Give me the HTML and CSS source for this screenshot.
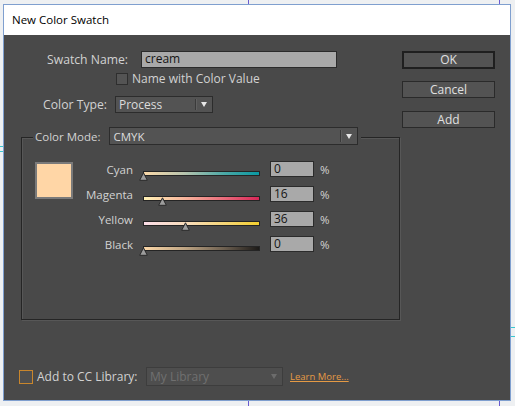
FILE: index.html
```html
<!DOCTYPE html>
<html>
<head>
<meta charset="utf-8">
<link rel="stylesheet" href="styles.css">
</head>
<body>
<div class="desk">
  <span class="guide gv gv1"></span>
  <span class="guide gv gv2"></span>
  <span class="guide gh gh1"></span>
  <span class="guide gh gh2"></span>
  <span class="guide gh gh3"></span>
  <span class="guide gh gh4"></span>
  <div class="win">
    <div class="titlebar">New Color Swatch</div>
    <div class="body">
      <div class="main">
        <div class="left">
          <div class="row r-name">
            <span class="lbl w-name">Swatch Name:</span>
            <div class="field name">cream</div>
          </div>
          <div class="row r-check">
            <span class="cb"></span>
            <span class="cb-text">Name with Color Value</span>
          </div>
          <div class="row r-type">
            <span class="lbl w-type">Color Type:</span>
            <div class="select type"><span class="sel-text">Process</span><span class="sep"></span><span class="arrow"></span></div>
          </div>
          <div class="frame">
            <div class="legend">
              <span class="lbl">Color Mode:</span>
              <div class="select mode"><span class="sel-text">CMYK</span><span class="sep"></span><span class="arrow"></span></div>
            </div>
            <div class="frame-body">
              <div class="swatch"></div>
              <div class="sliders">
                <div class="srow">
                  <span class="slbl">Cyan</span>
                  <div class="slider"><div class="bar bar-c"></div><svg class="thumb" style="left:0%" width="9" height="9" viewBox="0 0 9 9"><polygon points="4.5,0.8 8.3,8.3 0.7,8.3" fill="#9d9d9d" stroke="#2a2a2a" stroke-width="1"/></svg></div>
                  <div class="field num">0</div>
                  <span class="pct">%</span>
                </div>
                <div class="srow">
                  <span class="slbl">Magenta</span>
                  <div class="slider"><div class="bar bar-m"></div><svg class="thumb" style="left:16%" width="9" height="9" viewBox="0 0 9 9"><polygon points="4.5,0.8 8.3,8.3 0.7,8.3" fill="#9d9d9d" stroke="#2a2a2a" stroke-width="1"/></svg></div>
                  <div class="field num">16</div>
                  <span class="pct">%</span>
                </div>
                <div class="srow">
                  <span class="slbl">Yellow</span>
                  <div class="slider"><div class="bar bar-y"></div><svg class="thumb" style="left:36%" width="9" height="9" viewBox="0 0 9 9"><polygon points="4.5,0.8 8.3,8.3 0.7,8.3" fill="#9d9d9d" stroke="#2a2a2a" stroke-width="1"/></svg></div>
                  <div class="field num">36</div>
                  <span class="pct">%</span>
                </div>
                <div class="srow">
                  <span class="slbl">Black</span>
                  <div class="slider"><div class="bar bar-k"></div><svg class="thumb" style="left:0%" width="9" height="9" viewBox="0 0 9 9"><polygon points="4.5,0.8 8.3,8.3 0.7,8.3" fill="#9d9d9d" stroke="#2a2a2a" stroke-width="1"/></svg></div>
                  <div class="field num">0</div>
                  <span class="pct">%</span>
                </div>
              </div>
            </div>
          </div>
        </div>
        <div class="buttons">
          <div class="btn ok">OK</div>
          <div class="btn">Cancel</div>
          <div class="btn">Add</div>
        </div>
      </div>
      <div class="footer">
        <span class="cb cb-cc"></span>
        <span class="lbl cc-lbl">Add to CC Library:</span>
        <div class="select lib"><span class="sel-text">My Library</span><span class="arrow dim"></span></div>
        <span class="learn">Learn More...</span>
      </div>
    </div>
  </div>
</div>
</body>
</html>
```
FILE: styles.css
```css
* { box-sizing: border-box; }
html, body { margin: 0; padding: 0; }
body {
  width: 515px;
  height: 406px;
  overflow: hidden;
  background: #eef0f2;
  font-family: "Open Sans", "Noto Sans", sans-serif;
}
.desk {
  position: relative;
  width: 515px;
  height: 406px;
  padding: 4px 0 0 3px;
}
.guide { position: absolute; display: block; }
.gv { width: 1px; height: 406px; top: 0; background: #6a5bd0; }
.gv1 { left: 248px; }
.gv2 { left: 499px; }
.gh { height: 1px; background: #3cc8d0; }
.gh1 { left: 0; width: 4px; top: 146px; }
.gh2 { left: 0; width: 4px; top: 151px; }
.gh3 { left: 511px; width: 4px; top: 327px; }
.gh4 { left: 511px; width: 4px; top: 336px; }

.win {
  position: relative;
  width: 508px;
  height: 397px;
  border: 1px solid #7f9fcf;
  background: #494949;
  display: flex;
  flex-direction: column;
}
.titlebar {
  height: 30px;
  background: #ffffff;
  color: #000;
  font-size: 11.5px;
  line-height: 30px;
  padding-left: 8px;
}
.body {
  flex: 1;
  background: #494949;
  color: #d2d2d2;
  font-size: 11.5px;
}
.main {
  display: flex;
  padding-top: 16px;
}
.left { width: 396px; }
.row { display: flex; align-items: center; }
.lbl { white-space: nowrap; }
.w-name { width: 124px; text-align: right; font-size: 12.2px; }
.w-type { width: 103px; text-align: right; font-size: 12.2px; }

.field {
  background: #a9a9a9;
  border: 1px solid #2b2b2b;
  color: #151515;
  padding-left: 3px;
  line-height: 14px;
}
.name { margin-left: 13px; width: 196px; height: 17px; font-size: 12px; }

.r-check { margin-top: 5px; height: 12px; }
.cb {
  display: block;
  width: 12px;
  height: 12px;
  margin-left: 112px;
  background: #545454;
  border: 1px solid #2e2e2e;
}
.cb-text { margin-left: 4px; line-height: 12px; font-size: 12px; }

.r-type { margin-top: 11px; }
.select {
  display: flex;
  align-items: center;
  height: 17px;
  background: #535353;
  border: 1px solid #2c2c2c;
  color: #dcdcdc;
}
.sel-text { flex: 1; padding-left: 3px; line-height: 15px; }
.sep {
  width: 1px;
  align-self: stretch;
  margin: 2px 0;
  background: #3a3a3a;
  box-shadow: 1px 0 0 #606060;
}
.arrow {
  width: 0;
  height: 0;
  margin: 0 5px 0 5px;
  border-left: 3.5px solid transparent;
  border-right: 3.5px solid transparent;
  border-top: 5px solid #e8e8e8;
}
.arrow.dim { border-top-color: #6c6c6c; }
.type { margin-left: 8px; width: 98px; font-size: 12px; }

.frame {
  margin-top: 24px;
  margin-left: 17px;
  width: 379px;
  height: 183px;
  border: 1px solid #252525;
  box-shadow: inset 1px 1px 0 #575757, 1px 1px 0 #575757;
}
.legend {
  display: flex;
  align-items: center;
  height: 18px;
  margin-top: -11px;
  margin-left: 11px;
  width: 328px;
  padding: 0 3px 0 2px;
  background: #494949;
}
.mode { margin-left: 9px; width: 250px; height: 18px; }

.frame-body { display: flex; align-items: flex-start; }
.swatch {
  margin-top: 17px;
  margin-left: 13px;
  width: 38px;
  height: 37px;
  background: #ffd6a6;
  border: 2px solid #7a7a7a;
}
.sliders { margin-top: 16px; }
.srow {
  display: flex;
  align-items: flex-start;
  height: 25px;
}
.slbl {
  width: 60px;
  text-align: right;
  line-height: 16px;
  padding-top: 1px;
}
.slider {
  position: relative;
  width: 117px;
  height: 16px;
  margin-left: 10px;
}
.bar {
  margin-top: 10px;
  height: 5px;
  border: 1px solid #242424;
}
.bar-c { background: linear-gradient(to right, #fbd9a8, #b8c4ae 35%, #4aa8a6 70%, #0a98a2); }
.bar-m { background: linear-gradient(to right, #fff1b4, #f7b59c 35%, #e86a7a 70%, #d82758); }
.bar-y { background: linear-gradient(to right, #fbdde8, #f8dcb6 40%, #f6d56c 75%, #f3cf2e); }
.bar-k { background: linear-gradient(to right, #fbd7a8, #bfa584 35%, #6c5f50 70%, #1c1a18); }
.thumb {
  position: absolute;
  top: 11px;
  margin-left: -4px;
}
.num {
  margin-left: 10px;
  width: 44px;
  height: 16px;
  line-height: 14px;
  font-size: 12px;
}
.pct { margin-left: 6px; line-height: 16px; padding-top: 1px; }

.buttons { width: 93px; margin-left: 2px; font-size: 12px; }
.btn {
  height: 17px;
  margin-top: 13px;
  background: #535353;
  border: 1px solid #2a2a2a;
  color: #e0e0e0;
  text-align: center;
  line-height: 15px;
}
.btn.ok {
  margin-top: 0;
  height: 18px;
  border: 2px solid #1f1f1f;
  line-height: 14px;
}
.btn:nth-child(2) { margin-top: 12px; }

.footer {
  display: flex;
  align-items: center;
  margin-top: 47px;
  padding-left: 15px;
  height: 19px;
  font-size: 12px;
}
.cb-cc {
  margin-left: 0;
  width: 14px;
  height: 14px;
  border: 1px solid #c9862c;
  background: #4f4f4f;
}
.cc-lbl { margin-left: 4px; width: 109px; }
.lib {
  width: 137px;
  height: 19px;
  background: #4e4e4e;
  border: 1px solid #3d3d3d;
  color: #707070;
}
.learn {
  margin-left: 7px;
  font-size: 9.5px;
  color: #e59a45;
  text-decoration: underline;
}
```
